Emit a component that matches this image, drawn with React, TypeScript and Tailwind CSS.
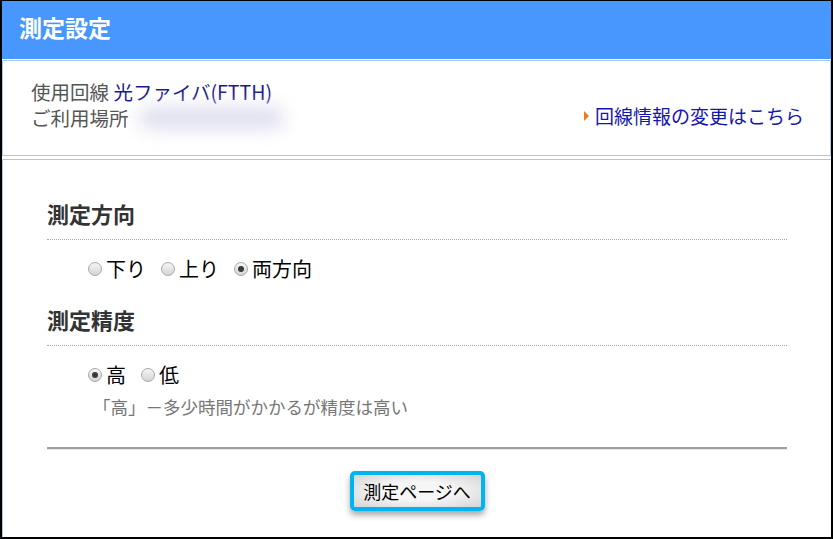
const font = { fontFamily: '"Noto Sans CJK JP", "Noto Sans", sans-serif' };

function Radio({ checked, label }: { checked?: boolean; label: string }) {
  return (
    <label className="flex items-center gap-[4px]">
      <span className="flex h-[14px] w-[14px] shrink-0 items-center justify-center rounded-full border border-[#a8a8a8] bg-gradient-to-b from-[#f6f6f6] to-[#d4d4d4]">
        {checked && <span className="h-[6px] w-[6px] rounded-full bg-[#3a3a3a]" />}
      </span>
      <span className="text-[20px] leading-[26px] text-black">{label}</span>
    </label>
  );
}

function Section({ title, children }: { title: string; children: React.ReactNode }) {
  return (
    <div>
      <h2 className="border-b border-dotted border-[#a9a9a9] pb-[11px] text-[22px] font-bold leading-[30px] text-[#333]">
        {title}
      </h2>
      {children}
    </div>
  );
}

export default function App() {
  return (
    <div
      style={font}
      className="flex h-[539px] w-[833px] flex-col overflow-hidden border-t border-r-2 border-b-2 border-l-2 border-black bg-white"
    >
      {/* Header */}
      <div className="flex h-[58px] shrink-0 items-center bg-[#4897ff] pb-[6px] pl-[17px]">
        <h1 className="text-[23px] font-bold text-white">測定設定</h1>
      </div>

      {/* Line info */}
      <div className="mt-px flex h-[96px] shrink-0 items-end justify-between border border-[#a6c8f2] pr-[26px] pb-[25px] pl-[28px]">
        <div className="flex flex-col gap-[2px] text-[19.5px] leading-[24px] text-[#555]">
          <p>
            使用回線 <span className="text-[#1a1a8c]">光ファイバ(FTTH)</span>
          </p>
          <p className="flex items-center gap-[10px]">
            ご利用場所
            <span className="h-[22px] w-[145px] rounded-full bg-[#dedeef] blur-[9px]" />
          </p>
        </div>
        <a className="mb-[1px] flex items-center gap-[6px] text-[19px] leading-[26px] text-[#1515b0]">
          <span className="h-0 w-0 border-y-[5px] border-l-[5px] border-y-transparent border-l-[#f07a10]" />
          回線情報の変更はこちら
        </a>
      </div>

      {/* Settings */}
      <div className="mt-[3px] flex-1 border-t border-l border-[#a6c8f2] px-[44px] pt-[38px]">
        <Section title="測定方向">
          <div className="mt-[16px] flex gap-[15px] pl-[41px]">
            <Radio label="下り" />
            <Radio label="上り" />
            <Radio checked label="両方向" />
          </div>
        </Section>

        <div className="mt-[22px]">
          <Section title="測定精度">
            <div className="mt-[16px] flex gap-[15px] pl-[41px]">
              <Radio checked label="高" />
              <Radio label="低" />
            </div>
            <p className="mt-[7px] pl-[46px] text-[17.5px] leading-[24px] text-[#777]">
              「高」－多少時間がかかるが精度は高い
            </p>
          </Section>
        </div>

        <div className="mt-[28px] border-t-2 border-[#a0a0a0] shadow-[0_1px_0_#e6e6e6]" />

        <div className="mt-[22px] flex justify-center">
          <button className="h-[40px] w-[135px] rounded-[5px] border-4 border-[#00b4ef] bg-[radial-gradient(ellipse_at_center,#f6f6f6_40%,#d4d4d4_100%)] text-[18px] text-black shadow-[0_4px_6px_rgba(0,0,0,0.35)]">
            測定ページへ
          </button>
        </div>
      </div>
    </div>
  );
}
